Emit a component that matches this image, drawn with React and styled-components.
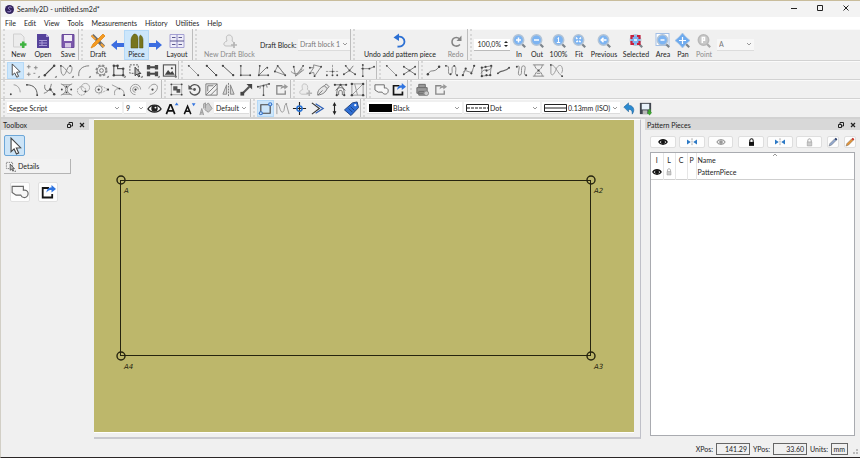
import React, { useState } from 'react';
import styled, { createGlobalStyle, css } from 'styled-components';

const GlobalStyle = createGlobalStyle`
    * { box-sizing: border-box; }
    body {
        margin: 0;
        background: #f0f0f0;
        color: #1c1c1c;
        font-family: Lato, "Open Sans", sans-serif;
        font-size: 7px;
        line-height: 10px;
    }
    button, input, select { font: inherit; color: inherit; margin: 0; }
    h1, h2 { margin: 0; font: inherit; }
`;

const Window = styled.div`
    display: flex;
    flex-direction: column;
    min-height: 100vh;
    border-top: 1px solid #c9bd9c;
    border-left: 1px solid #d2cfc6;
    border-bottom: 1px solid #2a2626;
`;

const TitleBar = styled.header`
    display: flex;
    align-items: center;
    height: 16px;
    padding: 0 1px 0 4px;
    background: #f3f3f3;
    h1 { flex: 1; margin-left: 3px; }
`;

const WindowButton = styled.button`
    width: 26px;
    height: 16px;
    padding: 0;
    border: 0;
    background: none;
`;

const MenuBar = styled.nav`
    display: flex;
    align-items: center;
    gap: 8px;
    height: 12px;
    padding-left: 4px;
    background: #fff;
    a { color: inherit; text-decoration: none; }
`;

const ToolBar = styled.div`
    display: flex;
    height: ${p => p.$height || 19}px;
    border-bottom: ${p => p.$thick || 1}px solid #d2d2d2;
    box-shadow: inset 0 1px #fafafa;
`;

const Group = styled.div`
    display: flex;
    align-items: center;
    flex: none;
    width: ${p => (p.$width ? p.$width + 'px' : 'auto')};
    border-right: ${p => (p.$last ? 0 : 1)}px solid #bdbdbd;
    &::before {
        content: '';
        flex: none;
        width: 2px;
        margin: 0 0 0 2px;
        align-self: stretch;
        border-left: 2px dotted #d8d8d8;
    }
`;

const Icons = styled.div`
    display: grid;
    grid-auto-flow: column;
    grid-auto-columns: 1fr;
    justify-items: center;
    flex: 1;
`;

const checked = css`
    background: #cce6fb;
    border-color: #b5d9f7;
`;

const IconButton = styled.button`
    display: flex;
    align-items: center;
    justify-content: center;
    width: 17px;
    height: 17px;
    padding: 0;
    border: 1px solid transparent;
    background: none;
    svg { flex: none; }
    ${p => p.$on && checked}
`;

const TextButton = styled.button`
    display: flex;
    flex-direction: column;
    align-items: center;
    flex: none;
    width: ${p => p.$w}px;
    height: 30px;
    padding: 2px 0 0;
    border: 1px solid transparent;
    background: none;
    white-space: nowrap;
    color: ${p => (p.disabled ? '#8a8a8a' : 'inherit')};
    ${p => p.$on && checked}
`;

const Arrow = styled.svg`
    flex: none;
    width: 13px;
    height: 12px;
    fill: #3c6de0;
`;

const ComboBox = styled.div`
    display: flex;
    align-items: center;
    flex: none;
    position: relative;
    width: ${p => p.$w}px;
    height: 12px;
    padding-left: 2px;
    margin-right: ${p => p.$gap || 0}px;
    background: ${p => (p.$off ? '#f7f7f7' : '#fff')};
    border-bottom: 1px solid #dcdcdc;
    color: ${p => (p.$off ? '#777' : '#1c1c1c')};
    select {
        flex: 1;
        min-width: 0;
        height: 10px;
        padding: 0;
        border: 0;
        appearance: none;
        background: none;
        opacity: 1;
    }
    > svg:last-child {
        position: absolute;
        right: 2px;
        pointer-events: none;
    }
`;

const BlockLabel = styled.label`
    flex: none;
    width: 38px;
    white-space: nowrap;
`;

const SpinBox = styled.div`
    display: flex;
    align-items: center;
    flex: none;
    width: 36px;
    height: 12px;
    background: #fff;
    border-bottom: 1px solid #bbb;
    input {
        flex: 1;
        width: 0;
        padding: 0 1px 0 0;
        border: 0;
        background: none;
        text-align: right;
    }
`;

const Swatch = styled.svg`
    flex: none;
    width: 23px;
    height: 8px;
    margin-right: 1px;
`;

const Workspace = styled.main`
    display: flex;
    flex: 1;
`;

const Dock = styled.aside`
    display: flex;
    flex-direction: column;
    flex: none;
    width: ${p => p.$width}px;
    margin-left: ${p => p.$gap || 0}px;
`;

const DockTitle = styled.div`
    display: flex;
    align-items: center;
    height: 11px;
    padding: 0 1px 0 2px;
    background: #d8d8d8;
    h2 { flex: 1; }
    button {
        display: flex;
        justify-content: center;
        width: 12px;
        padding: 0;
        border: 0;
        background: none;
    }
`;

const ToolPanel = styled.div`
    display: flex;
    flex-direction: column;
    align-items: flex-start;
    gap: 3px;
    padding: 5px 3px;
`;

const PointerButton = styled.button`
    width: 21px;
    height: 21px;
    padding: 0;
    border: 1px solid #6da7d8;
    border-radius: 2px;
    background: #cce4f7;
    svg { display: block; margin: auto; }
`;

const SectionButton = styled.button`
    display: flex;
    align-items: center;
    gap: 2px;
    width: 67px;
    height: 15px;
    padding: 0 1px;
    border: solid #b4b4b4;
    border-width: 0 1px 1px 0;
    background: #f2f2f2;
`;

const PieceTools = styled.div`
    display: flex;
    gap: 8px;
    padding: 5px 6px;
`;

const RaisedButton = styled.button`
    display: flex;
    align-items: center;
    justify-content: center;
    width: 20px;
    height: 20px;
    padding: 0;
    border: 1px solid #e0e0e0;
    border-radius: 2px;
    background: #fdfdfd;
    svg { flex: none; }
`;

const View = styled.section`
    flex: 1;
    min-width: 0;
    margin-left: 5px;
    border-top: 1px solid #fff;
    border-right: 1px solid #bfc0c8;
    border-bottom: 2px solid #c9c9cf;
    padding: 0 6px 4px 0;
`;

const Scene = styled.svg`
    display: block;
    width: 100%;
    background: #bdb76b;
    box-shadow: 0 1px #fff;
`;

const PieceButtons = styled.div`
    display: flex;
    gap: 3px;
    padding: 6px 4px 4px 5px;
`;

const PieceButton = styled.button`
    display: flex;
    align-items: center;
    justify-content: center;
    flex: ${p => (p.$small ? '0 0 12px' : '1')};
    height: 12px;
    padding: 0;
    margin-left: ${p => (p.$gap ? 2 : 0)}px;
    border: 1px solid #dedede;
    border-radius: 2px;
    background: #fdfdfd;
    svg { flex: none; }
`;

const ListFrame = styled.div`
    flex: 1;
    margin: 0 5px 3px;
    border: 1px solid #a9abb0;
    background: #fff;
`;

const PieceTable = styled.table`
    width: 100%;
    table-layout: fixed;
    border-collapse: collapse;
    border-bottom: 1px solid #cfcfcf;
    th, td {
        height: 13px;
        padding: 0;
        font-weight: normal;
        text-align: center;
        border-right: 1px solid #e6e6e6;
    }
    th:last-child, td:last-child {
        padding-left: 1px;
        text-align: left;
        border-right: 0;
    }
    td svg { display: block; margin: auto; }
    .sort { position: absolute; left: 50%; top: 0; }
    thead { position: relative; }
`;

const StatusBar = styled.footer`
    display: flex;
    align-items: center;
    justify-content: flex-end;
    gap: 3px;
    height: 18px;
    padding: 2px 2px 0 0;
    > svg { margin-left: 1px; }
`;

const StatusBox = styled.output`
    width: ${p => p.$w}px;
    height: 12px;
    padding-right: 2px;
    border: 1px solid #666;
    text-align: right;
`;

// ---- icon drawings, all on a 16 x 16 grid ----

const Dots = ({ at, r = 1, fill = '#444' }) => at.map(([x, y]) => (
    <circle key={x + '-' + y} cx={x} cy={y} r={r} fill={fill} stroke="none" />
));

const More = () => <path d="M13.500 15.500h2v-2z" fill="#333" stroke="none" />;

const glass = (inner, grey) => (
    <>
        <path d="M10.500 10.500l3.700 3.700" stroke={grey ? '#aaa' : '#7d858c'} strokeWidth="2.200" />
        <circle cx="7.500" cy="7" r="5.200" fill={grey ? '#c9c9c9' : '#7db4f2'} stroke={grey ? '#b9b9b9' : '#b3c4d6'} strokeWidth="1.500" />
        <g stroke="#fff" strokeWidth="1.500">{inner}</g>
    </>
);

const pencil = (color, tip) => (
    <>
        <path d="M1.500 14.500l1.500-4 7.500-7.500 2.500 2.500-7.500 7.500z" fill={color} stroke="#555" strokeWidth=".6" />
        <path d="M10.500 3l2-2 2.500 2.500-2 2z" fill={tip} stroke="none" />
    </>
);

const pic = {
    cursor: <path d="M4.500 1v12l2.700-2.400 2.100 4.600 2-1-2.100-4.400 3.800-.3z" fill="#fff" stroke="#444" />,
    points: <><path d="M2 4h4M4 2v4M9.500 5h4M11.500 3v4M2 12h4M4 10v4M9 11h2" stroke="#888" /><More /></>,
    line: <><path d="M3 13L13 3" stroke="#444" strokeWidth="1.200" /><Dots at={[[3, 13], [13, 3]]} r={1.300} /><More /></>,
    curves: <><path d="M2 3c0 4 0 10 3 10 3-1 3-9 7-10 3 0 2 6 0 8-3 1-5-7-10-8" stroke="#888" /><Dots at={[[2, 3], [12, 3]]} /><More /></>,
    arcs: <><path d="M3 14C2 7 7 3 14 3" stroke="#777" /><More /></>,
    gear: <><circle cx="8" cy="8" r="5.700" strokeWidth="1.500" strokeDasharray="2.400 2.100" stroke="#888" /><circle cx="8" cy="8" r="4.700" stroke="#777" /><circle cx="8" cy="8" r="2" stroke="#777" /><More /></>,
    piece: <><path d="M3 13V3h4v3h6v7z" strokeWidth="1.200" stroke="#555" /><Dots at={[[3, 3], [7, 3], [13, 6], [3, 13], [13, 13]]} r={1.300} /><More /></>,
    details: <><path d="M2 2h9v9H2z" strokeDasharray="2 1.300" stroke="#555" /><path d="M7.500 4.500v9l2.200-1.700 1.600 3 1.300-.6-1.500-3h2.600z" fill="#bbb" stroke="#333" /><More /></>,
    layoutTools: <><path d="M2 2h3.500v1.500h5V2H14v5h-3.500V5.500h-5V7H2zM2 9h3.500v1.500h5V9H14v5h-3.500v-1.500h-5V14H2z" fill="#4a4a4a" stroke="none" /><More /></>,
    image: <><rect x="1.500" y="2" width="13" height="12" strokeWidth="1.200" /><path d="M3 12.500l3.500-5 2.500 3 2-2 2.500 4z" fill="#444" stroke="none" /><circle cx="10.500" cy="5.500" r="1.100" fill="#444" stroke="none" /><More /></>,
    seg1: <><path d="M3 3l10 10" stroke="#999" /><Dots at={[[3, 3], [13, 13]]} /></>,
    seg2: <><path d="M3 3l10 10" stroke="#555" /><Dots at={[[3, 3], [13, 13]]} r={1.200} /></>,
    seg3: <><path d="M2 3l11 10" stroke="#555" /><Dots at={[[2, 3], [13, 13]]} r={1.200} /></>,
    perp: <><path d="M3 3v10h10" stroke="#777" /><Dots at={[[3, 3], [3, 13], [13, 13]]} /></>,
    angle: <><path d="M4 3L3 13h10M3 13l8-8" stroke="#777" /><Dots at={[[4, 3], [3, 13], [13, 13], [12, 5]]} /></>,
    shoulder: <><path d="M5 3L2 9l11 4zM5 3l8 10" stroke="#888" /><Dots at={[[5, 3], [2, 9], [13, 13]]} /></>,
    bisector: <><path d="M1 9c4 4 9 3 12-3M4 4l2 10L14 3M6 14l9-7" stroke="#888" /><Dots at={[[4, 4], [14, 3]]} /></>,
    triangle: <><path d="M2 5h4V2l8 2-7 10-1-4-4 1 4-6" stroke="#888" /><Dots at={[[2, 5], [14, 4], [7, 14], [2, 11]]} /></>,
    cross: <><path d="M8 2v10M1 9h13" stroke="#999" strokeDasharray="2.500 1" /><Dots at={[[8, 13], [2, 13], [13, 13], [8, 9]]} /></>,
    intersect: <><path d="M4 3l4 5 6 4M2 12l6-4 4-5" stroke="#777" /><Dots at={[[4, 3], [14, 12], [2, 12], [8, 8]]} /></>,
    height: <><path d="M3 2v12M1 6h9l5-2" stroke="#888" /><Dots at={[[3, 2], [3, 14], [3, 6], [10, 6], [15, 4]]} /></>,
    xLine: <><path d="M2 4l12 8M2 12l12-8" stroke="#777" /><Dots at={[[2, 4], [14, 12], [2, 12], [14, 4], [8, 8]]} /></>,
    spline1: <><path d="M2 12c4-7 6 0 12-8" stroke="#777" /><Dots at={[[2, 12], [14, 4]]} r={1.300} /></>,
    spline2: <><path d="M2 3c6-1 0 10 5 9 4-1-1-8 4-9 4 1-1 10 3 10" stroke="#888" /><Dots at={[[2, 3], [7, 12], [11, 3], [14, 13]]} /></>,
    spline3: <><path d="M2 13L5 6M2 10c4-5 7 3 11-2M14 3l-3 8" stroke="#888" /><Dots at={[[2, 13], [5, 6], [14, 3], [11, 11]]} r={1.200} /></>,
    spline4: <><path d="M3 5l10-2-1 10-9 1zM2 11c5-8 7 1 12-7" stroke="#888" /><Dots at={[[3, 5], [13, 3], [12, 13], [3, 14], [8, 8], [7, 4], [8, 13]]} r={1.200} /></>,
    spline5: <><path d="M2 11c5-5 7 0 12-6" stroke="#666" strokeWidth="1.200" /><Dots at={[[2, 11], [14, 5]]} /></>,
    spline6: <><path d="M3 4c6-4-1 9 3 9s0-10 4-10c5 0-2 10 3 10" stroke="#888" /><Dots at={[[3, 4], [13, 13]]} /></>,
    hourglass: <><path d="M2 2h12M2 14h12M4 2c0 6 8 6 8 12M12 2c0 6-8 6-8 12M6 11h4" stroke="#888" /><Dots at={[[8, 8]]} /></>,
    spline7: <><path d="M2 2v9c1 3 3 2 5-3 2-6 6-7 7-3 1 3 0 5-1 6M3 2c4 1 6 9 11 12" stroke="#999" /><Dots at={[[2, 2], [14, 14]]} /></>,

    arcA: <><path d="M6 3c4 0 7 4 7 8" stroke="#999" /><Dots at={[[3, 13]]} /></>,
    arcB: <><path d="M2 3c7 0 11 4 11 11" stroke="#555" /><Dots at={[[2, 3], [13, 14]]} /></>,
    arcC: <><path d="M3 3c-1 5 2 8 6 5M10 2c-1 6-4 9-8 10M9 8l4 5" stroke="#777" /><Dots at={[[9, 8], [13, 13]]} r={1.300} /></>,
    twoArcs: <><path d="M2 2c7 2 7 10 0 12M14 2c-7 2-7 10 0 12M4 3h8M4 13h8" stroke="#888" /><Dots at={[[8, 5], [8, 11], [3, 8], [13, 8]]} /></>,
    circles: <><circle cx="10" cy="6" r="4.500" stroke="#aaa" /><circle cx="6" cy="9.500" r="4.500" stroke="#999" strokeDasharray="2 1" /><Dots at={[[10, 10]]} /></>,
    tangent: <><circle cx="5" cy="8" r="3.700" stroke="#999" /><path d="M5 3l10 5-10 5" stroke="#aaa" strokeDasharray="2 1" /><Dots at={[[5, 8], [15, 8]]} r={1.200} /></>,
    arcTan: <><path d="M1 3l8 4c4 1 5 3 5 7M4 14c-1-5 1-7 5-7" stroke="#999" /><Dots at={[[14, 14], [9, 7]]} /></>,
    spiral: <><path d="M13.500 8a5.500 5.500 0 1 0-5.500 5.500M11 8a3 3 0 1 0-3 3" stroke="#999" /><Dots at={[[8, 8]]} r={1.200} /></>,
    ellipse: <><path d="M5 13C10 14 16 6 12 3 9 1 5 4 4 7" stroke="#999" /><Dots at={[[8, 8]]} r={1.200} /></>,
    group: <><path d="M2.500 2.500h11v11h-11z" stroke="#aaa" /><path d="M4.500 4.500H9V9H4.500zM8 7.500h4v4H8z" fill="#555" stroke="none" /><Dots at={[[2.500, 2.500], [13.500, 2.500], [2.500, 13.500], [13.500, 13.500]]} /></>,
    rotate: <><path d="M3.500 5.500A5.500 5.500 0 1 1 3 10" stroke="#555" strokeWidth="1.500" /><path d="M1.500 3v5h5z" fill="#555" stroke="none" /><circle cx="8" cy="8" r="1.500" fill="#555" stroke="none" /></>,
    mirrorLine: <><path d="M2 2h12v12H2zM2 14L14 2M4 10V4h6M7 14l7-7" stroke="#777" /></>,
    mirrorAxis: <><path d="M8 1v14" strokeDasharray="2 1" stroke="#777" /><path d="M6 3v10H2zM10 3v10h4z" stroke="#888" fill="#d6d6d6" /></>,
    move: <><path d="M4 12l7-7" strokeWidth="2.200" stroke="#555" /><path d="M8 2h6v6z" fill="#444" stroke="none" /><rect x="1.500" y="10.500" width="4" height="4" fill="#444" stroke="none" /></>,
    trueDarts: <><path d="M2 5l12-3M8 4v10M11 3l1 3M5 4l-1 3" stroke="#888" strokeWidth="1.200" /><Dots at={[[2, 5], [8, 4], [14, 2], [8, 14]]} /></>,
    export: <><path d="M9 4H3v9h9V9" stroke="#888" strokeWidth="1.400" /><path d="M7 8c0-3 2-4 4-4V2l4 3-4 3V6c-2 0-3 .5-4 2" fill="#999" stroke="none" /></>,
    exportBlue: <><path d="M9 4H2.700v9.500h9.500V10" stroke="#151515" strokeWidth="1.800" /><path d="M6.500 8.500c0-3 2-5 5-5V1l4.500 4-4.500 3.500V6c-2 0-3.500.5-5 2.500" fill="#2f74e0" stroke="none" /></>,
    newPiece: <><path d="M5 8C4 5 4 2 7 2s4 3 3 6c3 1 3 5 0 5H4c-3 0-3-4 1-5" fill="#ececec" stroke="#c0c0c0" /><path d="M9 12h6M12 9v6" stroke="#b5b5b5" strokeWidth="1.700" /></>,
    pen: <><path d="M3 14c-1-5 3-8 7-10l3 3c-2 4-4 6-10 7zM10 4l2-2 3 3-2 2M3 14l5-5" stroke="#777" fill="#e6e6e6" /></>,
    insert: <><path d="M1.500 3h13M4 14c0-6 1-8 4-8s4 2 4 8M3 9l5-6 5 6M6 14c0-4 0-5 2-5s2 1 2 5" stroke="#666" /><Dots at={[[2, 3], [8, 3], [14, 3], [4, 14], [12, 14]]} r={1.200} /></>,
    union: <><path d="M2 2h12v12H2zM2 14L14 2M5 2l3 12" stroke="#999" /><Dots at={[[2, 2], [14, 2], [2, 14], [14, 14]]} r={1.300} /></>,
    anchor: <path d="M1 3h10v3.500c3.500-.8 5 2 3.700 4.800-1.500 2.500-5 2-6-.5H4.500L1 8.500z" fill="#f7f7f7" stroke="#666" />,
    printer: <><path d="M4 6V2.500h7V6M2 6h11v6H2zM4 10h7v4H4z" fill="#999" stroke="#6a6a6a" /><circle cx="12" cy="12" r="2.500" fill="#ccc" stroke="#888" /></>,
    eye: <><path d="M1 8.500C4 3 12 3 15 8.500 12 13 4 13 1 8.500z" fill="#fff" stroke="#222" strokeWidth="1.500" /><circle cx="8" cy="8" r="3.400" fill="#222" stroke="none" /><circle cx="9" cy="7" r="1" fill="#fff" stroke="none" /></>,
    eyeBold: <><path d="M1.500 8C4 3 12 3 14.500 8 12 13 4 13 1.500 8z" fill="#fff" stroke="#111" strokeWidth="2.400" /><circle cx="8" cy="8" r="3.300" fill="#111" stroke="none" /></>,
    eyeGrey: <><path d="M1.500 8C4 3 12 3 14.500 8 12 13 4 13 1.500 8z" fill="#fff" stroke="#999" strokeWidth="1.800" /><circle cx="8" cy="8" r="3" fill="#999" stroke="none" /></>,
    fontUp: <><path d="M2.500 14L6.500 4h1l4 10M4 10.500h6" stroke="#111" strokeWidth="1.800" /><path d="M11.500 4.500l2-3 2 3z" fill="#3475df" stroke="none" /></>,
    fontDown: <><path d="M3.500 14L7 5.500l3.500 8.500M4.500 11h5" stroke="#111" strokeWidth="1.600" /><path d="M11.500 2.500l2 3 2-3z" fill="#3475df" stroke="none" /></>,
    fontFlag: <><path d="M2 15l2-7 2 7M3 12.500h2M6 8V3l2-1v6M8 5l3-3 4 6-4 4-4-3" fill="#c6c6c6" stroke="#999" /></>,
    showBox: <><path d="M3 13V4h10v9z" stroke="#444" strokeWidth="1.200" /><Dots at={[[13, 3.500], [3, 13]]} r={2.200} fill="#3b78cf" /><Dots at={[[13, 3.500], [3, 13]]} r={1} fill="#cce6fb" /></>,
    wires: <><path d="M2 14V3c3 0 3 9 6 9 3-1 1-8 4-9l3 11" stroke="#999" /><Dots at={[[2, 3], [12, 3]]} fill="#999" /></>,
    originAxis: <><path d="M8 1v14M1 8h14" stroke="#222" strokeWidth="1.200" /><circle cx="8" cy="8" r="2.800" stroke="#2873d6" strokeWidth="1.600" /></>,
    chevrons: <><path d="M2 2l8 6-8 6" stroke="#333" strokeWidth="1.200" /><path d="M6 3l8 5-8 5" stroke="#2f62b8" strokeWidth="1.400" /></>,
    updown: <><path d="M8 3v10" stroke="#222" strokeWidth="1.200" /><path d="M6 5l2-4 2 4zM6 11l2 4 2-4z" fill="#222" stroke="none" /></>,
    tag: <><path d="M9 2l5-1 1.500 6-8 8.500L.5 9.500z" fill="#2f6fd6" stroke="#173e7e" /><circle cx="12" cy="4.500" r="1.200" fill="#fff" stroke="none" /><path d="M5 8l4 4M7 6l4 4" stroke="#173e7e" /></>,
    undoBlue: <path d="M3 6.500L8 2v2.500c5 0 7.500 5 4 9.500 0-4-1-5-4-5v2.500z" fill="#2989d0" stroke="#1a6099" strokeWidth=".6" />,
    diskette: <><path d="M2 2h12v12H2z" fill="#40454e" stroke="none" /><path d="M4 3h8v6H4z" fill="#e8f2fa" stroke="none" /><path d="M5 10h5v4H5z" fill="#b9b9b9" stroke="none" /><path d="M11 9h2.500v3h1.500l-2.700 3.500L9.500 12H11z" fill="#3eaa2f" stroke="none" /></>,

    newDoc: <><path d="M2.500 1h7.500l3 3v10H2.500z" fill="#ececec" stroke="#d0d0d0" /><path d="M9 11.500h6.500M12.200 8.500v6.500" stroke="#3fb341" strokeWidth="2.600" /></>,
    openDoc: <><path d="M2 1h9l3 3v11H2z" fill="#56439b" stroke="none" /><path d="M11 1v3h3" fill="#b5a8df" stroke="none" /><path d="M4 7.500h8M4 10h8M4 12.500h8M7 7v6" stroke="#a99bd7" /></>,
    saveDoc: <><path d="M2 1.500h12v13H2z" fill="#7b58ab" stroke="#6a4a9b" /><path d="M4 2h8v6H4z" fill="#f1edf6" stroke="none" /><path d="M5 10h6v4.500H5z" fill="#d6c9e5" stroke="none" /></>,
    draft: <><path d="M1 3l2.500-2L15 12.500 12.500 15z" fill="#6c6c6c" stroke="none" /><path d="M13 1l2 2L5 13l-4 2 2-4z" fill="#f59b22" stroke="#e08613" strokeWidth=".8" /><path d="M1.500 2.500l4 4M11 11l3 3" stroke="#f2a23a" strokeWidth="2" /></>,
    vest: <path d="M2 15V7c0-3 2-5 3-6 3 0 4 2 4 5v9zM10.500 15V7c-.5-3 0-4 1-5 1.500 1 2.500 3 2.500 5v8z" fill="#77751d" stroke="#55530e" strokeWidth=".5" />,
    layout: <><path d="M1 1.500h14v13H1z" fill="#eeedf8" stroke="#a5a1d3" /><path d="M8 1.500v13" stroke="#8d89c4" /><path d="M1 8h14M3 4.500h3.500M9.500 4.500H13M3 11.500h3.500M9.500 11.500H13" stroke="#5a578f" strokeWidth="1.200" /></>,
    undo: <><path d="M4.500 4c5-1.500 8 1 8 4.800 0 3.200-3 5.200-7 4.700" stroke="#2b6fd3" strokeWidth="1.800" /><path d="M1.500 4.500L7 .5v7.500z" fill="#2b6fd3" stroke="none" /></>,
    redo: <><path d="M12 6C8 3 4 5 4 9s5 5.500 8 2.500" stroke="#858585" strokeWidth="1.500" /><path d="M13.500 2.500V8H8.500z" fill="#858585" stroke="none" /></>,
    zoomIn: glass(<path d="M7.500 4.500v5M5 7h5" />),
    zoomOut: glass(<path d="M5 7h5" />),
    zoomFull: glass(<path d="M6.500 5.500l1-1v5M5.800 9.500h3.400" strokeWidth="1" />),
    zoomFit: glass(<path d="M5 4.500l5 5M10 4.500l-5 5" strokeDasharray="2 2.500" />),
    zoomPrev: glass(<path d="M10.500 7h-5M7.500 4.800L5.200 7l2.300 2.200" />),
    zoomSel: glass(<><path d="M3.500 6V3H6M9 3h2.500v3M11.500 8v3H9M6 11H3.500V8" stroke="#c8203c" strokeWidth="2.200" /><path d="M6 7h3" /></>),
    zoomArea: <><rect x="1" y=".5" width="13" height="12" fill="#fff" stroke="#a3bfe6" />{glass(<path d="M5.500 7h4" />)}</>,
    pan: <><path d="M10.500 10.500l3.700 3.700" stroke="#7d858c" strokeWidth="2.200" /><path d="M7.500 0L11 4l4 3.500-4 3.500-3.500 4L4 11 0 7.500 4 4z" fill="#6fabee" stroke="#a9c4e2" strokeWidth=".8" /><path d="M7.500 4v7M4 7.500h7" stroke="#fff" strokeWidth="1.200" /></>,
    zoomPoint: glass(<path d="M6.300 10V4.500h2.200v2.800H6.300" />, true),

    lock: <><path d="M5 7V4.500c0-4 6-4 6 0V7" stroke="#111" strokeWidth="1.800" /><path d="M3.500 7h9v7h-9z" fill="#111" stroke="none" /></>,
    lockGrey: <><path d="M5 7V4.500c0-4 6-4 6 0V7" stroke="#999" strokeWidth="1.600" /><path d="M4 7h8v7H4z" fill="#ccc" stroke="#999" /></>,
    flip: <><path d="M8 2v12" stroke="#777" strokeDasharray="3 1" /><path d="M0 4l6 4-6 4zM16 4l-6 4 6 4z" fill="#2c79c5" stroke="none" /></>,
    pencilBlue: pencil('#93a9cf', '#203666'),
    pencilRed: pencil('#e3953a', '#c6281b'),
};

const Icon = ({ name, size = 15 }) => (
    <svg width={size} height={size} viewBox="0 0 16 16" fill="none" stroke="#555" aria-hidden="true">
        {pic[name]}
    </svg>
);

const Chevron = () => (
    <svg width="6" height="4" viewBox="0 0 6 4" fill="none" stroke="#999">
        <path d="M1 1l2 2 2-2" />
    </svg>
);

const drawTools = [
    [178, ['cursor', 'points', 'line', 'curves', 'arcs', 'gear', 'piece', 'details', 'layoutTools', 'image']],
    [198, ['seg1', 'seg2', 'seg3', 'perp', 'angle', 'shoulder', 'bisector', 'triangle', 'cross', 'intersect', 'height']],
    [42, ['seg1', 'xLine']],
    [146, ['spline1', 'spline2', 'spline3', 'spline4', 'spline5', 'spline6', 'hourglass', 'spline7']],
];

const editTools = [
    [161, ['arcA', 'arcB', 'arcC', 'twoArcs', 'circles', 'tangent', 'arcTan', 'spiral', 'ellipse']],
    [129, ['group', 'rotate', 'mirrorLine', 'mirrorAxis', 'move', 'trueDarts', 'export']],
    [76, ['newPiece', 'pen', 'insert', 'union']],
    [41, ['anchor', 'exportBlue']],
    [41, ['printer', 'export']],
];

const zooms = [
    ['In', 'zoomIn', 18], ['Out', 'zoomOut', 18], ['100%', 'zoomFull', 25], ['Fit', 'zoomFit', 16],
    ['Previous', 'zoomPrev', 34], ['Selected', 'zoomSel', 30], ['Area', 'zoomArea', 24], ['Pan', 'pan', 16],
    ['Point', 'zoomPoint', 26],
];

const Tool = ({ icon, text, w, on, disabled }) => (
    <TextButton $w={w} $on={on} disabled={disabled}>
        <Icon name={icon} size={16} />
        <span>{text}</span>
    </TextButton>
);

const IconRow = ({ names, active }) => (
    <Icons>
        {names.map((n, i) => (
            <IconButton key={n + i} aria-label={n} $on={n === active}><Icon name={n} /></IconButton>
        ))}
    </Icons>
);

const Combo = ({ id, label, value, children, ...rest }) => (
    <ComboBox {...rest}>
        {children}
        <select id={id} aria-label={label} disabled={rest.$off}><option>{value}</option></select>
        <Chevron />
    </ComboBox>
);

const DockHeader = ({ title }) => (
    <DockTitle>
        <h2>{title}</h2>
        <button aria-label="Float">
            <svg width="6" height="6" viewBox="0 0 6 6" fill="none" stroke="#222"><path d="M2 2V.5h3.500V4H4M.5 2.500h3v3h-3z" /></svg>
        </button>
        <button aria-label="Close">
            <svg width="6" height="6" viewBox="0 0 6 6" stroke="#222" strokeWidth="1.200"><path d="M1 1l4 4M5 1L1 5" /></svg>
        </button>
    </DockTitle>
);

const corners = [
    ['A', 27, 60], ['A2', 497, 60], ['A3', 497, 236], ['A4', 27, 236],
];

export default function App() {

    const [zoom, setZoom] = useState('100,0%');

    return (
        <Window>
            <GlobalStyle />
            <TitleBar>
                <svg width="9" height="9" viewBox="0 0 9 9">
                    <circle cx="4.500" cy="4.500" r="4.500" fill="#33245f" />
                    <path d="M6.500 2.500C4 1 2 3 4.500 4.400S6 7.500 2.500 6.500" fill="none" stroke="#a796d8" />
                </svg>
                <h1>Seamly2D - untitled.sm2d*</h1>
                <WindowButton aria-label="Minimize">
                    <svg width="8" height="8" stroke="#222"><path d="M1 4.500h6" /></svg>
                </WindowButton>
                <WindowButton aria-label="Maximize">
                    <svg width="8" height="8" fill="none" stroke="#222"><path d="M1.500 1.500h5v5h-5z" /></svg>
                </WindowButton>
                <WindowButton aria-label="Close">
                    <svg width="8" height="8" stroke="#222"><path d="M1.500 1.500l5 5M6.500 1.500l-5 5" /></svg>
                </WindowButton>
            </TitleBar>
            <MenuBar>
                {['File', 'Edit', 'View', 'Tools', 'Measurements', 'History', 'Utilities', 'Help'].map(m => (
                    <a href="#" key={m}>{m}</a>
                ))}
            </MenuBar>

            <ToolBar $height={32}>
                <Group $width={78}>
                    <Tool icon="newDoc" text="New" w={23} />
                    <Tool icon="openDoc" text="Open" w={26} />
                    <Tool icon="saveDoc" text="Save" w={24} />
                </Group>
                <Group $width={114}>
                    <Tool icon="draft" text="Draft" w={26} />
                    <Arrow viewBox="0 0 13 12"><path d="M0 6l6-5v3h7v4H6v3z" /></Arrow>
                    <Tool icon="vest" text="Piece" w={25} on />
                    <Arrow viewBox="0 0 13 12"><path d="M13 6L7 1v3H0v4h7v3z" /></Arrow>
                    <Tool icon="layout" text="Layout" w={30} />
                </Group>
                <Group $width={158}>
                    <Tool icon="newPiece" text="New Draft Block" w={61} disabled />
                    <BlockLabel htmlFor="block">Draft Block:</BlockLabel>
                    <Combo id="block" value="Draft block 1" $w={52} $off />
                </Group>
                <Group $width={117}>
                    <Tool icon="undo" text="Undo add pattern piece" w={86} />
                    <Tool icon="redo" text="Redo" w={25} disabled />
                </Group>
                <Group $last>
                    <SpinBox>
                        <input aria-label="Zoom" value={zoom} onChange={e => setZoom(e.target.value)} />
                        <svg width="8" height="10" viewBox="0 0 8 10" fill="#222"><path d="M2 4l2-2 2 2zM2 6l2 2 2-2z" /></svg>
                    </SpinBox>
                    {zooms.map(([text, icon, w]) => (
                        <Tool key={text} icon={icon} text={text} w={w} disabled={text === 'Point'} />
                    ))}
                    <Combo label="Point name" value="A" $w={37} $off />
                </Group>
            </ToolBar>
            <ToolBar>
                {drawTools.map(([w, names], i) => (
                    <Group key={i} $width={w} $last={i === 3}><IconRow names={names} active="cursor" /></Group>
                ))}
            </ToolBar>
            <ToolBar>
                {editTools.map(([w, names], i) => (
                    <Group key={i} $width={w} $last={i === 4}><IconRow names={names} /></Group>
                ))}
            </ToolBar>
            <ToolBar $height={20} $thick={2}>
                <Group $width={250}>
                    <Combo label="Font" value="Segoe Script" $w={115} $gap={2} />
                    <Combo label="Font size" value="9" $w={22} />
                    <IconRow names={['eye', 'fontUp', 'fontDown', 'fontFlag']} />
                    <Combo label="Language" value="Default" $w={35} $gap={2} />
                </Group>
                <Group $width={110}>
                    <IconRow names={['showBox', 'wires', 'originAxis', 'chevrons', 'updown', 'tag']} active="showBox" />
                </Group>
                <Group $last>
                    <Combo label="Color" value="Black" $w={95} $gap={2}>
                        <Swatch><path d="M0 0h23v8H0z" /></Swatch>
                    </Combo>
                    <Combo label="Line type" value="Dot" $w={76} $gap={2}>
                        <Swatch fill="none" stroke="#222"><path d="M.5.5h22v7H.5z" /><path d="M1 4h21" strokeWidth="1.200" strokeDasharray="3 1" /></Swatch>
                    </Combo>
                    <Combo label="Line weight" value="0.13mm (ISO)" $w={78}>
                        <Swatch fill="none" stroke="#222"><path d="M.5.5h22v7H.5z" /><path d="M1 4h21" /></Swatch>
                    </Combo>
                    <IconRow names={['undoBlue', 'diskette']} />
                </Group>
            </ToolBar>

            <Workspace>
                <Dock $width={88}>
                    <DockHeader title="Toolbox" />
                    <ToolPanel>
                        <PointerButton aria-label="Pointer"><Icon name="cursor" size={18} /></PointerButton>
                        <SectionButton><Icon name="details" size={11} />Details</SectionButton>
                        <PieceTools>
                            <RaisedButton aria-label="Anchor point"><Icon name="anchor" size={18} /></RaisedButton>
                            <RaisedButton aria-label="Export"><Icon name="exportBlue" size={16} /></RaisedButton>
                        </PieceTools>
                    </ToolPanel>
                </Dock>
                <View>
                    <Scene viewBox="0 0 540 312" fill="none" stroke="#26240f" fontFamily="'Segoe Script', 'DejaVu Sans', sans-serif" fontSize="7">
                        <path d="M27 60.500h470M27 235.500h470M26.500 60v176M496.500 60v176" />
                        {corners.map(([name, x, y]) => (
                            <g key={name}>
                                <circle cx={x} cy={y} r="4" strokeWidth="1.400" />
                                <text x={x + 3} y={y + 13} fill="#26240f" stroke="none" fontStyle="italic">{name}</text>
                            </g>
                        ))}
                    </Scene>
                </View>
                <Dock $width={215} $gap={4}>
                    <DockHeader title="Pattern Pieces" />
                    <PieceButtons>
                        <PieceButton aria-label="Show all"><Icon name="eyeBold" size={10} /></PieceButton>
                        <PieceButton aria-label="Invert visible"><Icon name="flip" size={10} /></PieceButton>
                        <PieceButton aria-label="Hide all"><Icon name="eyeGrey" size={10} /></PieceButton>
                        <PieceButton aria-label="Lock all" $gap><Icon name="lock" size={9} /></PieceButton>
                        <PieceButton aria-label="Invert locked"><Icon name="flip" size={10} /></PieceButton>
                        <PieceButton aria-label="Unlock all"><Icon name="lockGrey" size={9} /></PieceButton>
                        <PieceButton aria-label="Pen color" $small $gap><Icon name="pencilBlue" size={10} /></PieceButton>
                        <PieceButton aria-label="Fill color" $small $gap><Icon name="pencilRed" size={10} /></PieceButton>
                    </PieceButtons>
                    <ListFrame>
                        <PieceTable>
                            <colgroup>
                                <col width="12" /><col width="12" /><col width="12" /><col width="9" /><col />
                            </colgroup>
                            <thead>
                                <tr>
                                    <th>I</th><th>L</th><th>C</th><th>P</th>
                                    <th>Name <svg className="sort" width="96" height="4" fill="none" stroke="#999"><path d="M20 3l2-2 2 2" /></svg></th>
                                </tr>
                            </thead>
                            <tbody>
                                <tr>
                                    <td><Icon name="eyeBold" size={10} /></td>
                                    <td><Icon name="lockGrey" size={8} /></td>
                                    <td /><td />
                                    <td>PatternPiece</td>
                                </tr>
                            </tbody>
                        </PieceTable>
                    </ListFrame>
                </Dock>
            </Workspace>
            <StatusBar>
                <span>XPos:</span><StatusBox $w={34}>141.29</StatusBox>
                <span>YPos:</span><StatusBox $w={34}>33.60</StatusBox>
                <span>Units:</span><StatusBox $w={17}>mm</StatusBox>
                <svg width="6" height="12" fill="#bbb"><path d="M4 6h2v2H4zM4 9h2v2H4zM1 9h2v2H1z" /></svg>
            </StatusBar>
        </Window>
    );
}
